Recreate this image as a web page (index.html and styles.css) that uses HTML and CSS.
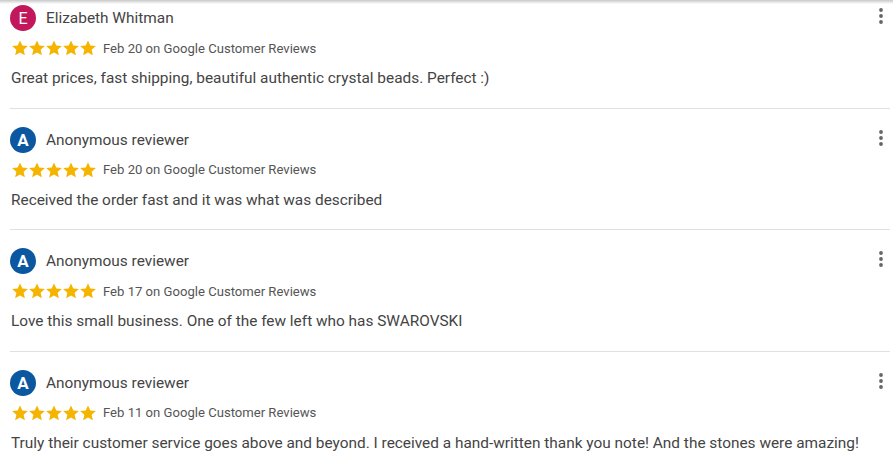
FILE: index.html
```html
<!DOCTYPE html>
<html lang="en">
<head>
<meta charset="utf-8">
<title>Reviews</title>
<link rel="stylesheet" href="styles.css">
</head>
<body>
<div class="topshadow"></div>
<div class="list">
  <div class="review first">
    <div class="head">
      <span class="avatar pink">E</span>
      <span class="name">Elizabeth Whitman</span>
      <svg class="more" viewBox="0 0 24 24" width="24" height="24"><circle cx="12" cy="6" r="1.9"/><circle cx="12" cy="12" r="1.9"/><circle cx="12" cy="18" r="1.9"/></svg>
    </div>
    <div class="meta">
      <span class="stars"><svg viewBox="0 0 85 16" width="85" height="16"><defs><path id="st" d="M8 0.4l2.3 5.2 5.6 0.5-4.3 3.7 1.3 5.5L8 12.4 3.1 15.3l1.3-5.5L0.1 6.1l5.6-0.5z"/></defs><use href="#st" x="0"/><use href="#st" x="17"/><use href="#st" x="34"/><use href="#st" x="51"/><use href="#st" x="68"/></svg></span>
      <span class="date">Feb 20 on Google Customer Reviews</span>
    </div>
    <p class="text">Great prices, fast shipping, beautiful authentic crystal beads. Perfect :)</p>
  </div>
  <div class="review">
    <div class="head">
      <span class="avatar blue">A</span>
      <span class="name">Anonymous reviewer</span>
      <svg class="more" viewBox="0 0 24 24" width="24" height="24"><circle cx="12" cy="6" r="1.9"/><circle cx="12" cy="12" r="1.9"/><circle cx="12" cy="18" r="1.9"/></svg>
    </div>
    <div class="meta">
      <span class="stars"><svg viewBox="0 0 85 16" width="85" height="16"><use href="#st" x="0"/><use href="#st" x="17"/><use href="#st" x="34"/><use href="#st" x="51"/><use href="#st" x="68"/></svg></span>
      <span class="date">Feb 20 on Google Customer Reviews</span>
    </div>
    <p class="text">Received the order fast and it was what was described</p>
  </div>
  <div class="review">
    <div class="head">
      <span class="avatar blue">A</span>
      <span class="name">Anonymous reviewer</span>
      <svg class="more" viewBox="0 0 24 24" width="24" height="24"><circle cx="12" cy="6" r="1.9"/><circle cx="12" cy="12" r="1.9"/><circle cx="12" cy="18" r="1.9"/></svg>
    </div>
    <div class="meta">
      <span class="stars"><svg viewBox="0 0 85 16" width="85" height="16"><use href="#st" x="0"/><use href="#st" x="17"/><use href="#st" x="34"/><use href="#st" x="51"/><use href="#st" x="68"/></svg></span>
      <span class="date">Feb 17 on Google Customer Reviews</span>
    </div>
    <p class="text">Love this small business. One of the few left who has SWAROVSKI</p>
  </div>
  <div class="review last">
    <div class="head">
      <span class="avatar blue">A</span>
      <span class="name">Anonymous reviewer</span>
      <svg class="more" viewBox="0 0 24 24" width="24" height="24"><circle cx="12" cy="6" r="1.9"/><circle cx="12" cy="12" r="1.9"/><circle cx="12" cy="18" r="1.9"/></svg>
    </div>
    <div class="meta">
      <span class="stars"><svg viewBox="0 0 85 16" width="85" height="16"><use href="#st" x="0"/><use href="#st" x="17"/><use href="#st" x="34"/><use href="#st" x="51"/><use href="#st" x="68"/></svg></span>
      <span class="date">Feb 11 on Google Customer Reviews</span>
    </div>
    <p class="text">Truly their customer service goes above and beyond. I received a hand-written thank you note! And the stones were amazing!</p>
  </div>
</div>
</body>
</html>
```
FILE: styles.css
```css
html, body {
  margin: 0;
  padding: 0;
  background: #fff;
  font-family: Roboto, "Noto Sans", Arial, sans-serif;
  color: #444;
  overflow: hidden;
}
.topshadow {
  position: absolute;
  top: 0;
  left: 0;
  right: 0;
  height: 4px;
  background: linear-gradient(to bottom, #c8c8c8, rgba(255,255,255,0));
}
.list {
  margin: 0 3px 0 10px;
}
.review {
  padding: 18px 0 19px;
  border-bottom: 1px solid #e0e0e0;
}
.review.first {
  padding-top: 5px;
}
.review.last {
  border-bottom: none;
}
.head {
  display: flex;
  align-items: center;
  height: 26px;
}
.avatar {
  width: 26px;
  height: 26px;
  border-radius: 50%;
  color: #fff;
  display: flex;
  align-items: center;
  justify-content: center;
  font-size: 16px;
}
.avatar.pink {
  background: #c2185b;
  font-weight: 400;
}
.avatar.blue {
  background: #0b57a0;
  font-weight: 700;
  font-size: 17px;
}
.name {
  margin-left: 10px;
  font-size: 15.4px;
  color: #444;
  flex: 1;
}
.more {
  fill: #666;
  margin-right: -3px;
  position: relative;
  top: -2px;
}
.meta {
  display: flex;
  align-items: center;
  margin-top: 9px;
  height: 16px;
}
.stars {
  display: flex;
  margin-left: 2px;
  fill: #f4b400;
}
.date {
  margin-left: 6px;
  font-size: 13.1px;
  color: #555;
}
.text {
  margin: 12px 0 0 1px;
  font-size: 15.4px;
  line-height: 20.5px;
  color: #444;
}
```
